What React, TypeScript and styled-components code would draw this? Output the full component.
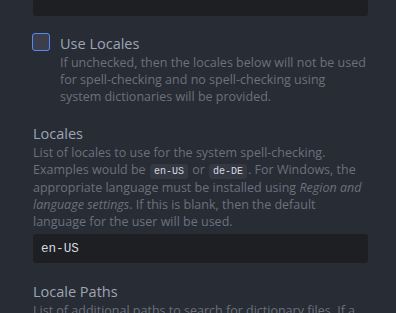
import React from 'react'
import styled, { createGlobalStyle } from 'styled-components'

const GlobalStyle = createGlobalStyle`
  html, body {
    margin: 0;
    padding: 0;
    background: #282c34;
    overflow: hidden;
  }
  body {
    font-family: 'Open Sans', 'Noto Sans', sans-serif;
    -webkit-font-smoothing: antialiased;
  }
`

const Panel = styled.div`
  width: 396px;
  height: 313px;
  box-sizing: border-box;
  padding: 0 28px 0 33px;
  overflow: hidden;
  background: #282c34;
`

const Input = styled.div<{ $clipped?: boolean }>`
  box-sizing: border-box;
  height: 29px;
  margin-top: ${({ $clipped }) => ($clipped ? '-13px' : '0')};
  padding: 0 8px;
  display: flex;
  align-items: center;
  background: #1d1f23;
  border-radius: 3px;
  color: #d7dae0;
  font-family: 'Liberation Mono', 'DejaVu Sans Mono', monospace;
  font-size: 12.6px;
`

const CheckRow = styled.div`
  display: flex;
  align-items: flex-start;
  gap: 10px;
  margin-top: 18px;
  margin-left: -1px;
`

const Checkbox = styled.span`
  flex: none;
  box-sizing: border-box;
  width: 18px;
  height: 18px;
  margin-top: -1px;
  border: 1.5px solid #568af2;
  border-radius: 3px;
  background: #3a3f4b;
`

const Setting = styled.div<{ $gap?: number }>`
  margin-top: ${({ $gap }) => $gap ?? 0}px;
`

const Title = styled.div`
  color: #9da5b4;
  font-size: 14.5px;
  line-height: 20px;
`

const Description = styled.div`
  color: #6b717d;
  font-size: 12.5px;
  line-height: 17px;
  margin-bottom: 4px;

  em {
    font-style: italic;
  }
`

const Code = styled.code`
  display: inline-block;
  padding: 0 4px;
  margin: 0 1px;
  line-height: 15px;
  background: #333842;
  border-radius: 3px;
  color: #d7dae0;
  font-family: 'Liberation Mono', 'DejaVu Sans Mono', monospace;
  font-size: 10px;
`

export default function App() {
  return (
    <>
      <GlobalStyle />
      <Panel>
        <Input $clipped />
        <CheckRow>
          <Checkbox />
          <div>
            <Title>Use Locales</Title>
            <Description>
              If unchecked, then the locales below will not be used for spell-checking and no
              spell-checking using system dictionaries will be provided.
            </Description>
          </div>
        </CheckRow>
        <Setting $gap={15}>
          <Title>Locales</Title>
          <Description>
            List of locales to use for the system spell-checking. Examples would be{' '}
            <Code>en-US</Code> or <Code>de-DE</Code>. For Windows, the appropriate language must
            be installed using <em>Region and language settings</em>. If this is blank, then the
            default language for the user will be used.
          </Description>
          <Input>en-US</Input>
        </Setting>
        <Setting $gap={19}>
          <Title>Locale Paths</Title>
          <Description>
            List of additional paths to search for dictionary files. If a locale cannot be found
            in Chromium, the spell-checker will search these paths.
          </Description>
        </Setting>
      </Panel>
    </>
  )
}
